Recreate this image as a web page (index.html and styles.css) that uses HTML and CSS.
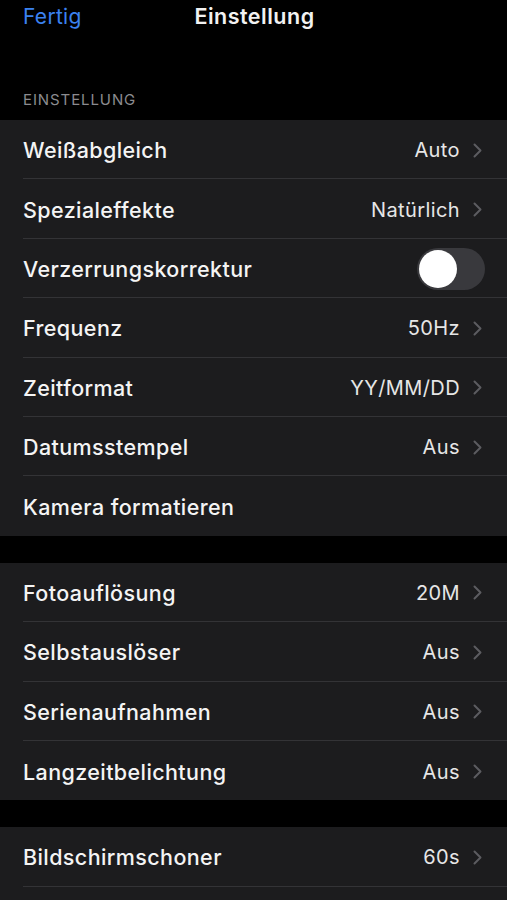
FILE: index.html
```html
<!DOCTYPE html>
<html lang="de">
<head>
<meta charset="utf-8">
<link rel="stylesheet" href="styles.css">
</head>
<body>
<div class="screen">
  <header class="nav">
    <span class="nav-btn">Fertig</span>
    <span class="nav-title">Einstellung</span>
  </header>
  <div class="section-title">EINSTELLUNG</div>
  <ul class="group">
    <li class="row"><span class="label">Weißabgleich</span><span class="value">Auto</span><svg class="chev" viewBox="0 0 9 15"><path d="M1.5 1.5 L7.5 7.5 L1.5 13.5"/></svg></li>
    <li class="row"><span class="label">Spezialeffekte</span><span class="value">Natürlich</span><svg class="chev" viewBox="0 0 9 15"><path d="M1.5 1.5 L7.5 7.5 L1.5 13.5"/></svg></li>
    <li class="row"><span class="label">Verzerrungskorrektur</span><span class="toggle"><span class="knob"></span></span></li>
    <li class="row"><span class="label">Frequenz</span><span class="value">50Hz</span><svg class="chev" viewBox="0 0 9 15"><path d="M1.5 1.5 L7.5 7.5 L1.5 13.5"/></svg></li>
    <li class="row"><span class="label">Zeitformat</span><span class="value">YY/MM/DD</span><svg class="chev" viewBox="0 0 9 15"><path d="M1.5 1.5 L7.5 7.5 L1.5 13.5"/></svg></li>
    <li class="row"><span class="label">Datumsstempel</span><span class="value">Aus</span><svg class="chev" viewBox="0 0 9 15"><path d="M1.5 1.5 L7.5 7.5 L1.5 13.5"/></svg></li>
    <li class="row"><span class="label">Kamera formatieren</span></li>
  </ul>
  <ul class="group">
    <li class="row"><span class="label">Fotoauflösung</span><span class="value">20M</span><svg class="chev" viewBox="0 0 9 15"><path d="M1.5 1.5 L7.5 7.5 L1.5 13.5"/></svg></li>
    <li class="row"><span class="label">Selbstauslöser</span><span class="value">Aus</span><svg class="chev" viewBox="0 0 9 15"><path d="M1.5 1.5 L7.5 7.5 L1.5 13.5"/></svg></li>
    <li class="row"><span class="label">Serienaufnahmen</span><span class="value">Aus</span><svg class="chev" viewBox="0 0 9 15"><path d="M1.5 1.5 L7.5 7.5 L1.5 13.5"/></svg></li>
    <li class="row"><span class="label">Langzeitbelichtung</span><span class="value">Aus</span><svg class="chev" viewBox="0 0 9 15"><path d="M1.5 1.5 L7.5 7.5 L1.5 13.5"/></svg></li>
  </ul>
  <ul class="group">
    <li class="row"><span class="label">Bildschirmschoner</span><span class="value">60s</span><svg class="chev" viewBox="0 0 9 15"><path d="M1.5 1.5 L7.5 7.5 L1.5 13.5"/></svg></li>
    <li class="row"><span class="label">&nbsp;</span></li>
  </ul>
</div>
</body>
</html>
```
FILE: styles.css
```css
html, body {
  margin: 0;
  padding: 0;
  background: #000;
  height: 900px;
  overflow: hidden;
}
.screen {
  font-family: Inter, "Liberation Sans", sans-serif;
  color: #fff;
  background: #000;
}
.nav {
  display: grid;
  grid-template-columns: 1fr auto 1fr;
  align-items: center;
  height: 32px;
  padding: 0 23px;
}
.nav-btn {
  color: #3b82f0;
  font-size: 21px;
  letter-spacing: 0.3px;
}
.nav-title {
  font-size: 21.5px;
  font-weight: 600;
  letter-spacing: 0.5px;
  color: #f2f2f2;
  padding-left: 2px;
}
.section-title {
  margin-top: 58px;
  height: 30px;
  padding: 0 23px;
  font-size: 15px;
  color: #8b8b8f;
  letter-spacing: 0.9px;
}
.group {
  list-style: none;
  margin: 0 0 27px 0;
  padding: 0 0 0 23px;
  background: #1c1c1e;
}
.row {
  display: flex;
  align-items: center;
  height: 59.4px;
  box-sizing: border-box;
  border-bottom: 1px solid #333336;
  padding-right: 25px;
  padding-top: 2px;
}
.group .row:last-child {
  border-bottom: none;
}
.label {
  flex: 1;
  font-size: 21.5px;
  font-weight: 500;
  letter-spacing: 0.4px;
  color: #f4f4f4;
}
.value {
  font-size: 20px;
  letter-spacing: 0.4px;
  color: #e6e6e6;
  margin-right: 13px;
}
.chev {
  width: 9px;
  height: 15px;
  fill: none;
  stroke: #5c5c60;
  stroke-width: 2;
  stroke-linecap: round;
  stroke-linejoin: round;
}
.toggle {
  width: 68px;
  height: 42px;
  border-radius: 21px;
  background: #39393d;
  margin-right: -3px;
  display: flex;
  align-items: center;
  padding: 2px;
  box-sizing: border-box;
}
.knob {
  width: 38px;
  height: 38px;
  border-radius: 50%;
  background: #fff;
}
```
